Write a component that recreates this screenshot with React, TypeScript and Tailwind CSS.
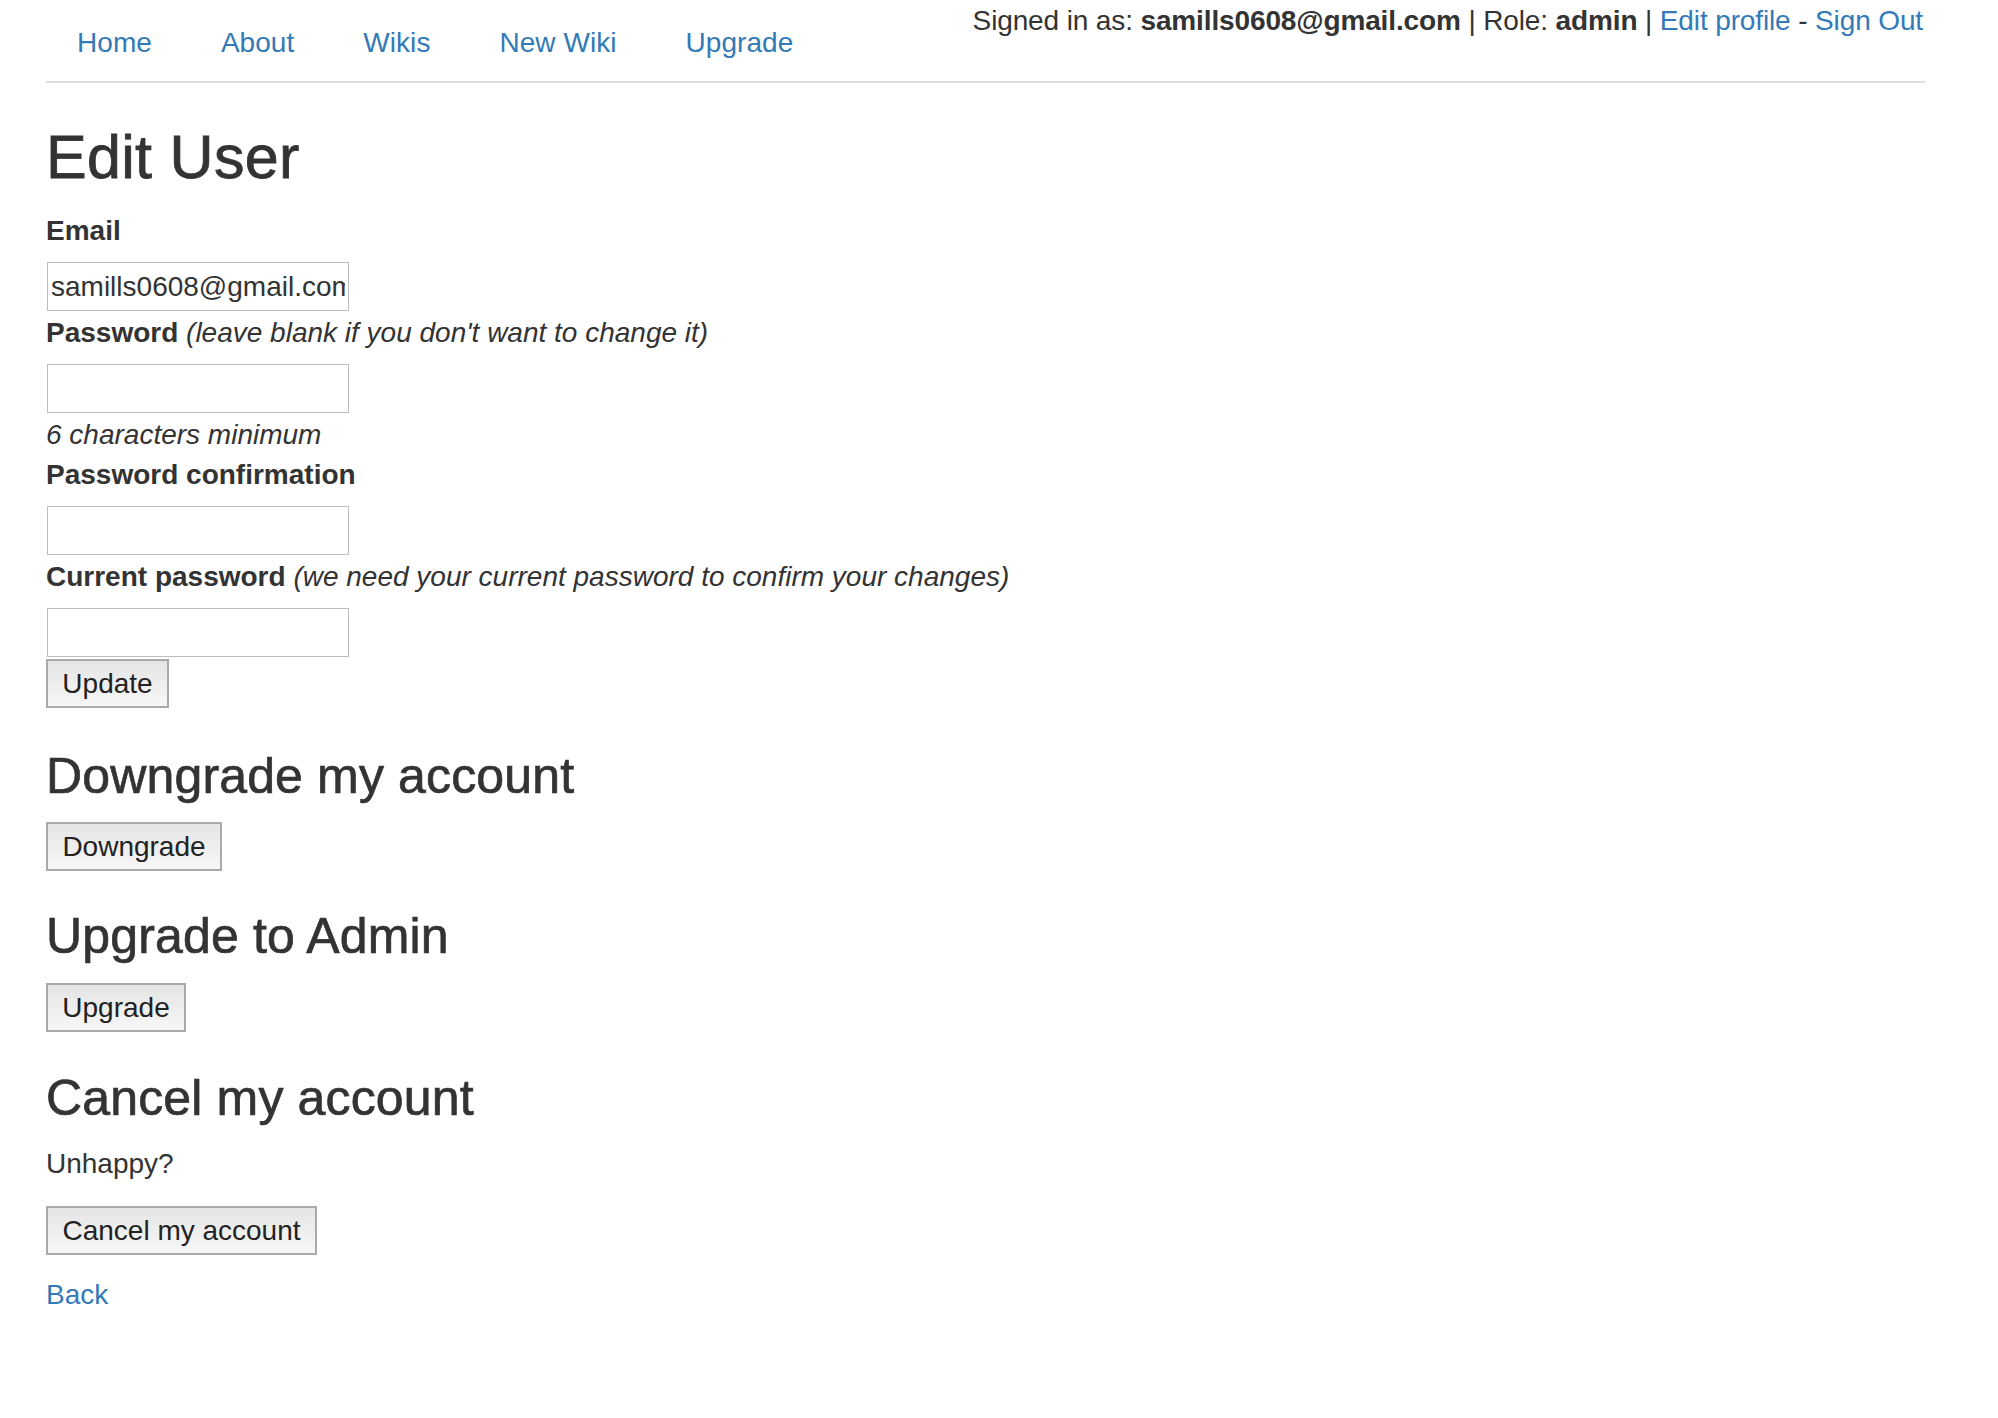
import React from "react";

function Btn({ label, w }: { label: string; w: string }) {
  return (
    <button
      type="button"
      className={`flex h-[49px] items-center justify-center border-2 border-[#aaaaaa] bg-linear-to-b from-[#e5e5e5] to-[#f7f7f7] text-[28px] leading-none text-[#222] ${w}`}
    >
      {label}
    </button>
  );
}

function Field() {
  return (
    <div className="mt-[11px] ml-[1px] h-[49px] w-[302px] border border-[#bdbdbd] bg-white" />
  );
}

export default function App() {
  return (
    <div className="min-h-screen bg-white pt-[1px] font-['Liberation_Sans',Arial,sans-serif] text-[28px] leading-[40px] text-[#333]">
      <div className="ml-[46px] w-[1879px] pb-[100px]">
        <header className="flex items-start justify-between border-b-2 border-[#dddddd]">
          <nav className="flex gap-[69px] pt-[22px] pb-[18px] pl-[31px]">
            {["Home", "About", "Wikis", "New Wiki", "Upgrade"].map((l) => (
              <a key={l} href="#" className="tracking-[0.05px] text-[#337ab7]">
                {l}
              </a>
            ))}
          </nav>
          <div className="whitespace-nowrap pr-[2px] tracking-[-0.13px]">
            Signed in as: <b>samills0608@gmail.com</b> | Role: <b>admin</b> |{" "}
            <a href="#" className="text-[#337ab7]">
              Edit profile
            </a>{" "}
            -{" "}
            <a href="#" className="text-[#337ab7]">
              Sign Out
            </a>
          </div>
        </header>

        <h2 className="mt-[41px] mb-[20px] text-[61px] leading-[67px] tracking-[0.3px] [-webkit-text-stroke:0.8px_#333]">
          Edit User
        </h2>

        <form className="flex flex-col items-start">
          <label className="font-bold">Email</label>
          <input
            readOnly
            defaultValue="samills0608@gmail.com"
            className="mt-[11px] ml-[1px] h-[49px] w-[302px] border border-[#bdbdbd] bg-white px-[3px] text-[28px] text-[#333] outline-none"
          />
          <label className="mt-[2px]">
            <b>Password</b> <i>(leave blank if you don't want to change it)</i>
          </label>
          <Field />
          <i className="mt-[2px]">6 characters minimum</i>
          <label className="font-bold">Password confirmation</label>
          <Field />
          <label className="mt-[2px]">
            <b>Current password</b> <i>(we need your current password to confirm your changes)</i>
          </label>
          <Field />
          <div className="mt-[2px]">
            <Btn label="Update" w="w-[123px]" />
          </div>
        </form>

        <h3 className="mt-[41px] text-[50px] leading-[55px] tracking-[0.15px] [-webkit-text-stroke:0.7px_#333]">
          Downgrade my account
        </h3>
        <div className="mt-[18px]">
          <Btn label="Downgrade" w="w-[176px]" />
        </div>

        <h3 className="mt-[38px] text-[50px] leading-[55px] tracking-[0.15px] [-webkit-text-stroke:0.7px_#333]">
          Upgrade to Admin
        </h3>
        <div className="mt-[19px]">
          <Btn label="Upgrade" w="w-[140px]" />
        </div>

        <h3 className="mt-[39px] text-[50px] leading-[55px] tracking-[0.15px] [-webkit-text-stroke:0.7px_#333]">
          Cancel my account
        </h3>
        <p className="mt-[18px]">Unhappy?</p>
        <div className="mt-[22px]">
          <Btn label="Cancel my account" w="w-[271px]" />
        </div>

        <a href="#" className="mt-[20px] block w-fit text-[#337ab7]">
          Back
        </a>
      </div>
    </div>
  );
}
